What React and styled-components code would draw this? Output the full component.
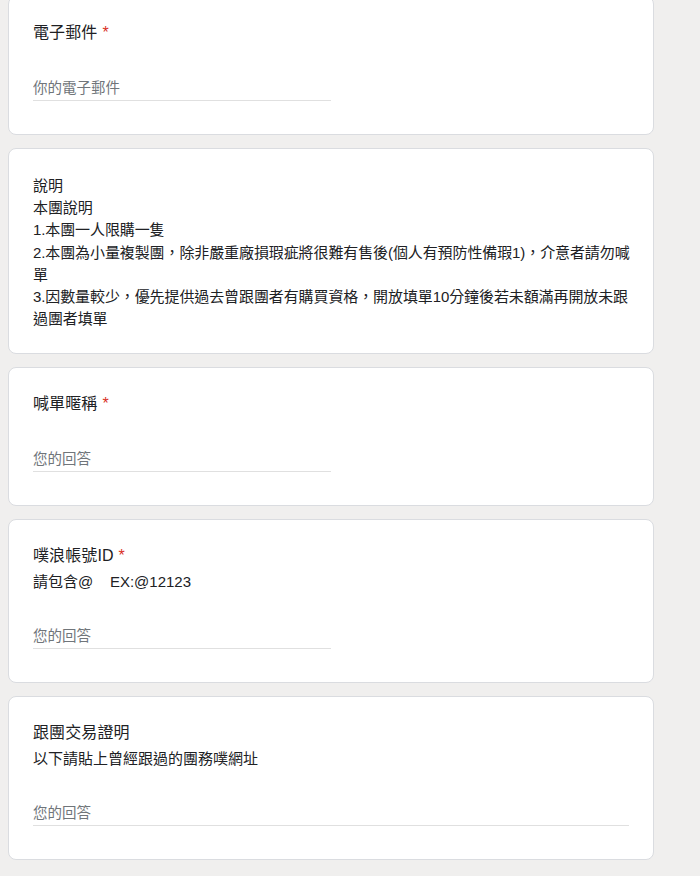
import React from "react";
import styled, { createGlobalStyle } from "styled-components";

const GlobalStyle = createGlobalStyle`
  html, body {
    margin: 0;
    padding: 0;
    background: #f0efee;
  }
  body {
    font-family: "Liberation Sans", "Noto Sans CJK TC", sans-serif;
    color: #202124;
  }
`;

const questions = [
  { title: "電子郵件", required: true, placeholder: "你的電子郵件" },
  {
    info: [
      "說明",
      "本團說明",
      "1.本團一人限購一隻",
      "2.本團為小量複製團，除非嚴重廠損瑕疵將很難有售後(個人有預防性備瑕1)，介意者請勿喊單",
      "3.因數量較少，優先提供過去曾跟團者有購買資格，開放填單10分鐘後若未額滿再開放未跟過團者填單",
    ],
  },
  { title: "喊單暱稱", required: true, placeholder: "您的回答" },
  {
    title: "噗浪帳號ID",
    required: true,
    description: "請包含@    EX:@12123",
    placeholder: "您的回答",
  },
  {
    title: "跟團交易證明",
    description: "以下請貼上曾經跟過的團務噗網址",
    placeholder: "您的回答",
    wide: true,
  },
];

const App = () => {
  return (
    <>
      <GlobalStyle />
      <Page>
        {questions.map((q, i) =>
          q.info ? (
            <Card key={i} $info>
              {q.info.map((line, j) => (
                <InfoLine key={j}>{line}</InfoLine>
              ))}
            </Card>
          ) : (
            <Card key={i}>
              <Title>
                {q.title}
                {q.required && <Required>*</Required>}
              </Title>
              {q.description && <Description>{q.description}</Description>}
              <Answer type="text" placeholder={q.placeholder} $wide={q.wide} />
            </Card>
          )
        )}
      </Page>
    </>
  );
};

const Page = styled.div`
  display: flex;
  flex-direction: column;
  gap: 13px;
  width: 646px;
  margin: -4px 0 0 8px;
`;

const Card = styled.div`
  display: flex;
  flex-direction: column;
  align-items: flex-start;
  background: #fff;
  border: 1px solid #dadce0;
  border-radius: 8px;
  padding: ${(p) => (p.$info ? "26px 16px 23px 24px" : "24px 24px 33px")};
`;

const Title = styled.div`
  font-size: 16px;
  line-height: 24px;
  color: #202124;
  letter-spacing: 0.1px;
`;

const Required = styled.span`
  color: #d93025;
  margin-left: 5px;
`;

const Description = styled.div`
  margin-top: 3px;
  font-size: 15px;
  line-height: 22px;
  white-space: pre-wrap;
  color: #202124;
`;

const InfoLine = styled.div`
  font-size: 15px;
  line-height: 22.2px;
  color: #202124;
  letter-spacing: -0.1px;
`;

const Answer = styled.input`
  box-sizing: border-box;
  width: ${(p) => (p.$wide ? "100%" : "50%")};
  height: 26px;
  margin-top: 30px;
  padding: 0;
  border: none;
  border-bottom: 1px solid #e0e0e0;
  outline: none;
  background: transparent;
  font-family: "Liberation Sans", "Noto Sans CJK TC", sans-serif;
  font-size: 14.5px;
  line-height: 25px;
  color: #202124;

  &::placeholder {
    color: #70757a;
  }
`;

export default App;
